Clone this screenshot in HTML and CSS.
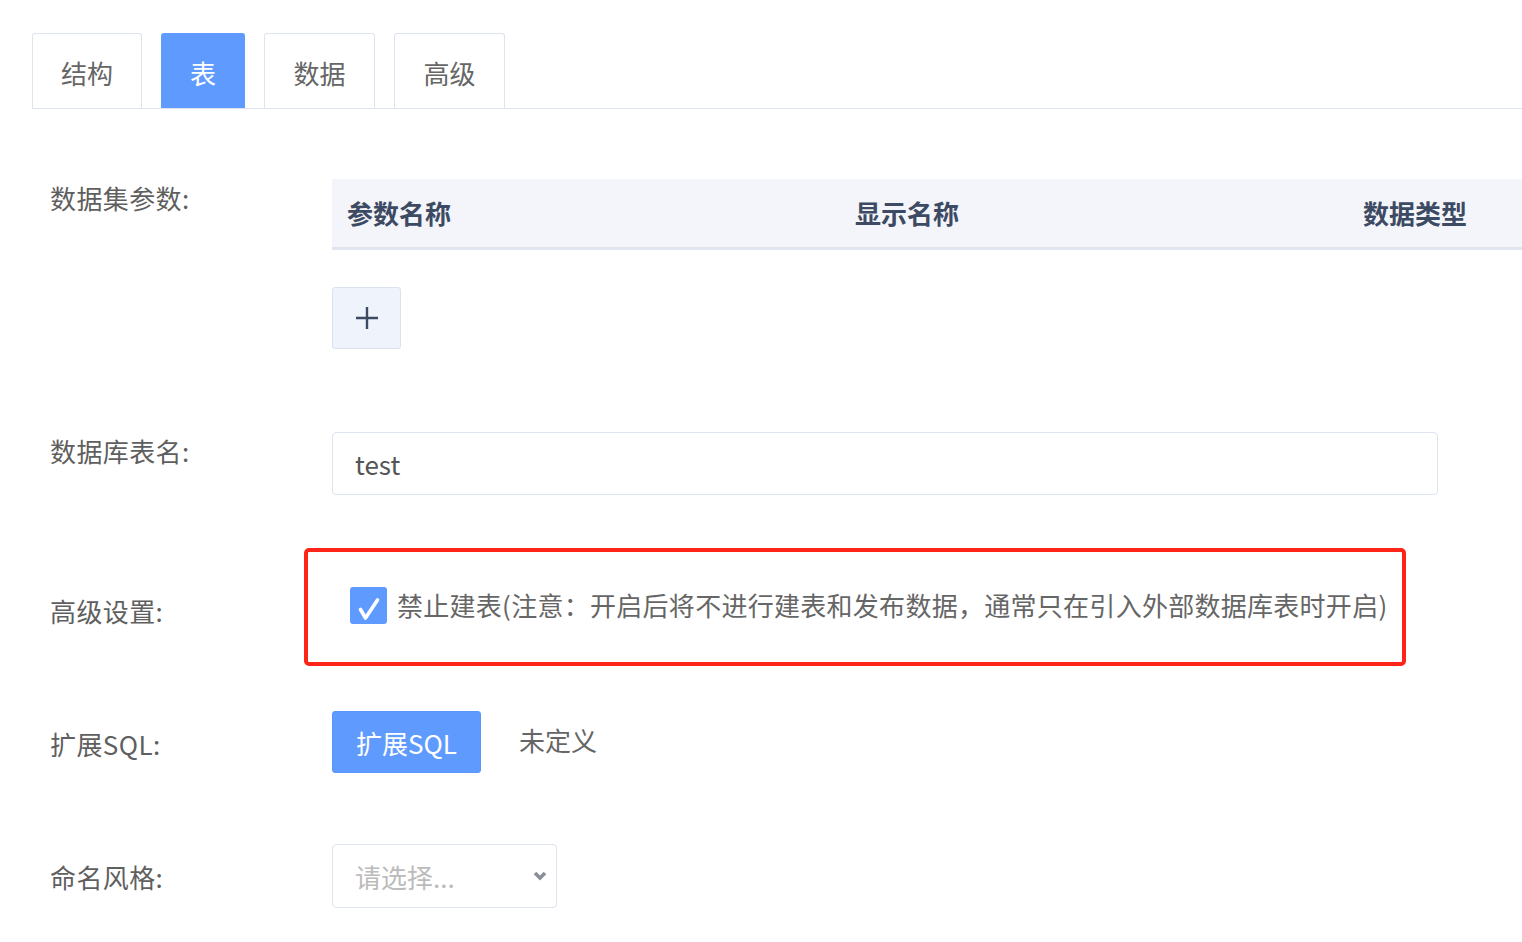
FILE: index.html
```html
<!DOCTYPE html>
<html lang="zh-CN">
<head>
    <meta charset="UTF-8">
    <title>数据集设置</title>
    <link rel="stylesheet" href="styles.css">
</head>
<body>
    <!-- Tabs -->
    <div class="tabs">
        <div class="tab">结构</div>
        <div class="tab active">表</div>
        <div class="tab">数据</div>
        <div class="tab">高级</div>
    </div>

    <div class="form">
        <!-- Dataset params -->
        <div class="row row-params">
            <div class="label">数据集参数:</div>
            <div class="field">
                <div class="param-table">
                    <div class="th">参数名称</div>
                    <div class="th">显示名称</div>
                    <div class="th">数据类型</div>
                </div>
                <button class="add-btn">
                    <svg width="24" height="24" viewBox="0 0 24 24"><path d="M12 1v22M1 12h22" stroke="#3d4a63" stroke-width="2.4" fill="none"/></svg>
                </button>
            </div>
        </div>

        <!-- Table name -->
        <div class="row row-table">
            <div class="label">数据库表名:</div>
            <div class="field">
                <input class="text-input" type="text" value="test">
            </div>
        </div>

        <!-- Advanced -->
        <div class="row row-adv">
            <div class="label">高级设置:</div>
            <div class="field">
                <div class="highlight">
                    <span class="checkbox">
                        <svg width="37" height="37" viewBox="0 0 37 37"><path d="M10.5 22.5l5 8.5L27.5 13" stroke="#fff" stroke-width="3.6" fill="none" stroke-linecap="round" stroke-linejoin="round"/></svg>
                    </span>
                    <span class="check-text">禁止建表(注意：开启后将不进行建表和发布数据，通常只在引入外部数据库表时开启)</span>
                </div>
            </div>
        </div>

        <!-- Extended SQL -->
        <div class="row row-sql">
            <div class="label">扩展SQL:</div>
            <div class="field inline">
                <button class="primary-btn">扩展SQL</button>
                <span class="muted">未定义</span>
            </div>
        </div>

        <!-- Naming style -->
        <div class="row row-naming">
            <div class="label">命名风格:</div>
            <div class="field">
                <div class="select">
                    <span class="placeholder">请选择...</span>
                    <svg class="chevron" width="14" height="12" viewBox="0 0 14 12"><path d="M2 3l5 5 5-5" stroke="#8a8f99" stroke-width="3.6" fill="none"/></svg>
                </div>
            </div>
        </div>
    </div>
</body>
</html>
```

FILE: styles.css
```css
body {
    margin: 0;
    background-color: #fff;
    font-family: "Noto Sans CJK SC", "Noto Sans", sans-serif;
    color: #666;
    overflow: hidden;
}

/* Tabs */
.tabs {
    display: flex;
    gap: 19px;
    margin: 33px 0 0 32px;
    border-bottom: 1px solid #dde3ef;
}

.tab {
    height: 75px;
    box-sizing: border-box;
    padding: 4px 28px 0;
    border: 1px solid #dde3ef;
    border-bottom: none;
    border-radius: 3px 3px 0 0;
    font-size: 26px;
    line-height: 70px;
    color: #666;
}

.tab.active {
    background-color: #5f9bff;
    border-color: #5f9bff;
    color: #fff;
}

.tab:nth-child(n+3) {
    padding: 4px 28.5px 0;
}

/* Form rows */
.form {
    margin-top: 70px;
}

.row {
    display: flex;
}

.label {
    width: 282px;
    flex-shrink: 0;
    padding-left: 50px;
    font-size: 26px;
    line-height: 38px;
    letter-spacing: 0.4px;
    color: #5f5f5f;
}

.field {
    flex: 1;
    min-width: 0;
}

.row-table {
    margin-top: 83px;
}

.row-adv {
    margin-top: 53px;
}

.row-adv .label {
    padding-top: 44px;
}

.row-sql {
    margin-top: 45px;
}

.row-sql .label,
.row-naming .label {
    padding-top: 14px;
}

.row-naming {
    margin-top: 71px;
}

/* Params table */
.param-table {
    display: flex;
    width: 1524px;
    height: 68px;
    background-color: #f4f5fa;
    border-bottom: 3px solid #e1e5ef;
}

.th {
    width: 508px;
    padding-left: 15px;
    font-size: 26px;
    font-weight: 700;
    line-height: 68px;
    color: #3d4a63;
}

.add-btn {
    display: flex;
    align-items: center;
    justify-content: center;
    width: 69px;
    height: 62px;
    margin-top: 37px;
    padding: 0 0 0 1px;
    background-color: #eff3fb;
    border: 1px solid #dbe2ee;
    border-radius: 3px;
}

/* Table name input */
.text-input {
    display: block;
    width: 1106px;
    height: 63px;
    box-sizing: border-box;
    padding: 0 22px;
    border: 1px solid #dde3ef;
    border-radius: 4px;
    font-family: inherit;
    font-size: 26px;
    color: #555;
    outline: none;
}

/* Highlighted checkbox area */
.highlight {
    display: flex;
    align-items: center;
    width: 1102px;
    height: 118px;
    box-sizing: border-box;
    margin-left: -28px;
    padding: 0 0 3px 42px;
    border: 4px solid #ff2418;
    border-radius: 5px;
}

.checkbox {
    display: flex;
    width: 37px;
    height: 37px;
    flex-shrink: 0;
    background-color: #5f9bff;
    border-radius: 3px;
}

.check-text {
    margin-left: 10px;
    margin-bottom: 2px;
    font-size: 26px;
    letter-spacing: 0.28px;
    color: #666;
    white-space: nowrap;
}

/* Extended SQL */
.inline {
    display: flex;
    align-items: center;
}

.primary-btn {
    width: 149px;
    height: 62px;
    padding: 0;
    background-color: #5f9bff;
    border: 1px solid #5a96fa;
    border-radius: 3px;
    font-family: inherit;
    font-size: 26px;
    color: #fff;
}

.muted {
    margin: 0 0 6px 38px;
    font-size: 26px;
    color: #666;
}

/* Select */
.select {
    display: flex;
    align-items: center;
    justify-content: space-between;
    width: 225px;
    height: 64px;
    box-sizing: border-box;
    padding: 0 9px 0 22px;
    border: 1px solid #dde3ef;
    border-radius: 4px;
}

.placeholder {
    font-size: 26px;
    color: #bbb;
}
```
